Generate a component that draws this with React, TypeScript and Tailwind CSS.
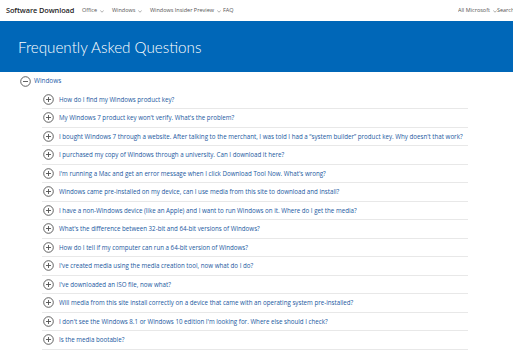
import React from "react";

const items = [
  "How do I find my Windows product key?",
  "My Windows 7 product key won't verify. What's the problem?",
  "I bought Windows 7 through a website. After talking to the merchant, I was told I had a \u201csystem builder\u201d product key. Why doesn't that work?",
  "I purchased my copy of Windows through a university. Can I download it here?",
  "I'm running a Mac and get an error message when I click Download Tool Now. What's wrong?",
  "Windows came pre-installed on my device, can I use media from this site to download and install?",
  "I have a non-Windows device (like an Apple) and I want to run Windows on it. Where do I get the media?",
  "What's the difference between 32-bit and 64-bit versions of Windows?",
  "How do I tell if my computer can run a 64-bit version of Windows?",
  "I've created media using the media creation tool, now what do I do?",
  "I've downloaded an ISO file, now what?",
  "Will media from this site install correctly on a device that came with an operating system pre-installed?",
  "I don't see the Windows 8.1 or Windows 10 edition I'm looking for. Where else should I check?",
  "Is the media bootable?",
];

function Circle({ plus }: { plus: boolean }) {
  return (
    <svg width="11" height="11" viewBox="0 0 11 11" className="shrink-0">
      <circle cx="5.5" cy="5.5" r="4.8" fill="none" stroke="#505050" strokeWidth="0.9" />
      <line x1="3" y1="5.5" x2="8" y2="5.5" stroke="#505050" strokeWidth="0.9" />
      {plus && <line x1="5.5" y1="3" x2="5.5" y2="8" stroke="#505050" strokeWidth="0.9" />}
    </svg>
  );
}

function Chevron() {
  return (
    <svg width="4" height="3" viewBox="0 0 4 3" className="ml-[3px] mt-[1px]">
      <path d="M0.3 0.6 L2 2.2 L3.7 0.6" fill="none" stroke="#777" strokeWidth="0.6" />
    </svg>
  );
}

export default function App() {
  return (
    <div
      className="w-[513px] h-[355px] overflow-hidden bg-white"
      style={{ fontFamily: '"Open Sans", "Noto Sans", Arial, sans-serif' }}
    >
      <header className="h-[21px] flex items-center pl-[6px] whitespace-nowrap">
        <span className="text-[7.4px] font-semibold text-[#262626] tracking-[-0.1px] w-[76px] shrink-0">
          Software Download
        </span>
        <nav className="flex items-center text-[5.5px] text-[#555]">
          <span className="flex items-center w-[30px]">Office<Chevron /></span>
          <span className="flex items-center w-[38px]">Windows<Chevron /></span>
          <span className="flex items-center w-[73px]">Windows Insider Preview<Chevron /></span>
          <span>FAQ</span>
        </nav>
        <div className="ml-auto flex items-center text-[5.5px] text-[#555] w-[55px] overflow-hidden">
          <span className="flex items-center w-[42px]">All Microsoft<Chevron /></span>
          <span>Search</span>
        </div>
      </header>
      <section className="h-[51px] bg-[#0067b8] pl-[18px] pt-[16px]">
        <h1
          className="text-[15.2px] font-light text-white leading-[20px]"
          style={{ fontFamily: 'Lato, "Open Sans", sans-serif' }}
        >
          Frequently Asked Questions
        </h1>
      </section>
      <div className="pl-[20px] h-[18.5px] flex items-center gap-[3px]">
        <Circle plus={false} />
        <span className="text-[6.4px] text-[#1b5ca8]">Windows</span>
      </div>
      <ul className="ml-[42px] w-[426px]">
        {items.map((t) => (
          <li
            key={t}
            className="h-[18.5px] flex items-center gap-[5px] pl-[1px] border-b border-[#e8e8e8] whitespace-nowrap"
          >
            <Circle plus={true} />
            <span className="text-[6.2px] text-[#1a58a0]">{t}</span>
          </li>
        ))}
      </ul>
    </div>
  );
}
